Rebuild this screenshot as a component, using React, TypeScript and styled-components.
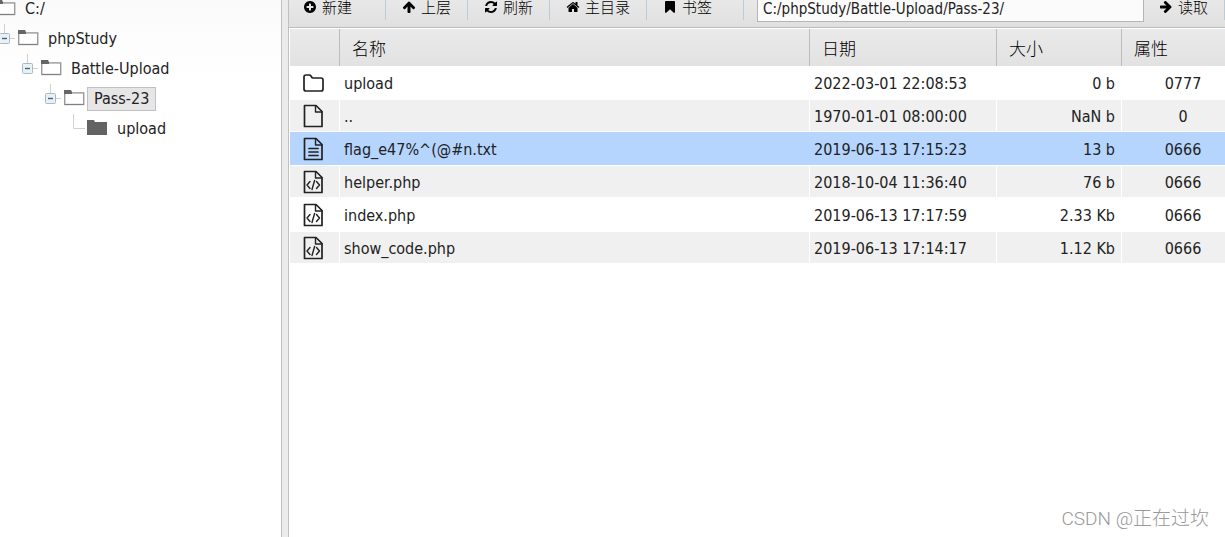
import React from "react";
import styled, { createGlobalStyle } from "styled-components";

const GlobalStyle = createGlobalStyle`
  * { box-sizing: border-box; }
  html, body, #root { height: 100%; }
  body {
    margin: 0;
    overflow: hidden;
    background: #fff;
    color: #222;
    font: 16px/20px "DejaVu Sans Condensed", "Noto Sans", "Noto Sans CJK SC", sans-serif;
  }
  button, input { font: inherit; color: inherit; }
`;

const Page = styled.div`
  display: flex;
  height: 100%;
`;

const Sidebar = styled.nav`
  flex: 0 0 281px;
  overflow: hidden;
  background: linear-gradient(#fafafa, #fff 80px);
`;

const Splitter = styled.div`
  flex: 0 0 8px;
  border: solid #c0c0c0;
  border-width: 0 1px;
  background: #ebebeb;
`;

const Main = styled.main`
  flex: 1;
  min-width: 0;
  overflow: hidden;
`;

const TreeList = styled.ul<{ $root?: boolean }>`
  list-style: none;
  margin: ${(p) => (p.$root ? "-6px 0 0 -24px" : "0")};
  padding: 0 0 0 ${(p) => (p.$root ? "0" : "23px")};
`;

const TreeRow = styled.div`
  display: flex;
  align-items: center;
  height: 30px;
`;

const Toggle = styled.button`
  width: 18px;
  height: 30px;
  padding: 0;
  border: 0;
  background: none;
`;

const Branch = styled.svg`
  display: block;
  width: 18px;
  height: 30px;
`;

const FolderSvg = styled.svg`
  width: 21px;
  height: 17px;
  margin: 0 2px 4px 1px;
`;

const TreeLabel = styled.a<{ $selected?: boolean }>`
  height: 24px;
  line-height: 22px;
  padding: 0 6px;
  border: 1px solid ${(p) => (p.$selected ? "#c0c0c0" : "transparent")};
  background: ${(p) => (p.$selected ? "#e6e6e6" : "none")};
  color: inherit;
  text-decoration: none;
`;

const Toolbar = styled.div`
  display: flex;
  align-items: flex-start;
  height: 28px;
  border-bottom: 1px solid #bcbcbc;
  background: linear-gradient(#e8e8e8, #e0e0e0);
`;

const ToolButton = styled.button<{ $roomy?: number }>`
  display: flex;
  align-items: center;
  gap: 5px;
  height: 20px;
  padding: 0 ${(p) => 16 + (p.$roomy ?? 0)}px 6px 16px;
  border: 0;
  border-right: 1px solid #b8cdd4;
  background: none;
  color: #000;
  font-size: 15px;
  font-weight: 300;
  font-family: "Noto Sans CJK SC", sans-serif;
  line-height: 14px;
  white-space: nowrap;

  &:first-child { padding-left: 14px; }
`;

const ToolSvg = styled.svg`
  flex: none;
  width: 14px;
  height: 14px;
`;

const PathInput = styled.input`
  flex: 1;
  min-width: 0;
  height: 22px;
  margin: 0 -1px 0 13px;
  padding: 0 5px 3px;
  border: 1px solid #b5b5b5;
  border-top: 0;
  background: #fbfbfb;
  font-size: 15px;
  outline: 0;
`;

const Files = styled.table`
  width: calc(100% + 20px);
  border: solid #fff;
  border-width: 1px 0 0 1px;
  border-spacing: 0;
  table-layout: fixed;
`;

const HeadCell = styled.th<{ $width?: number }>`
  width: ${(p) => (p.$width ? `${p.$width}px` : "auto")};
  height: 37px;
  padding: 0 12px;
  border-right: 1px solid #bcbcbc;
  background: linear-gradient(#eaeaea, #e2e2e2);
  color: #000;
  font-family: "Noto Sans CJK SC", sans-serif;
  font-size: 17px;
  font-weight: 300;
  text-align: left;
`;

const FileRow = styled.tr<{ $selected?: boolean }>`
  background: #fff;
  &:nth-child(even) { background: #f0f0f0; }
  td { border-color: #fff; }
  ${(p) => p.$selected && "&&, && td { background: #b5d5ff; border-color: #b5d5ff; }"}
`;

const Cell = styled.td<{ $align?: string }>`
  height: 33px;
  padding: 2px ${(p) => (p.$align === "right" ? 6 : 4)}px 0 4px;
  border: solid;
  border-width: 1px 1px 1px 0;
  text-align: ${(p) => p.$align ?? "left"};
  white-space: nowrap;
`;

const FileSvg = styled.svg`
  display: block;
  width: 22px;
  height: 24px;
  margin: -2px 0 0 9px;
  fill: none;
  stroke: #222;
  stroke-width: 1.7;
  stroke-linejoin: round;
  stroke-linecap: round;
`;

const Watermark = styled.div`
  position: absolute;
  right: 16px;
  bottom: 6px;
  color: #999;
  font: 300 19px/24px Roboto, "Noto Sans CJK SC", sans-serif;
`;

const toolPaths = {
  plus: "M1344 960v-128q0-26-19-45t-45-19h-256v-256q0-26-19-45t-45-19h-128q-26 0-45 19t-19 45v256h-256q-26 0-45 19t-19 45v128q0 26 19 45t45 19h256v256q0 26 19 45t45 19h128q26 0 45-19t19-45v-256h256q26 0 45-19t19-45zm320-64q0 209-103 385.5t-279.5 279.5-385.5 103-385.5-103-279.5-279.5-103-385.5 103-385.5 279.5-279.5 385.5-103 385.5 103 279.5 279.5 103 385.5z",
  arrow: "M1675 971q0 51-37 90l-75 75q-38 38-91 38-54 0-90-38l-294-293v704q0 52-37.5 84.5t-90.5 32.5h-128q-53 0-90.5-32.5t-37.5-84.5v-704l-294 293q-36 38-90 38t-90-38l-75-75q-38-38-38-90 0-53 38-91l651-651q35-37 90-37 54 0 91 37l651 651q37 39 37 91z",
  refresh: "M1639 1056q0 5-1 7-64 268-268 434.5t-478 166.5q-146 0-282.5-55t-243.5-157l-129 129q-19 19-45 19t-45-19-19-45v-448q0-26 19-45t45-19h448q26 0 45 19t19 45-19 45l-137 137q71 66 161 102t187 36q134 0 250-65t186-179q11-17 53-117 8-23 30-23h192q13 0 22.5 9.5t9.5 22.5zm25-800v448q0 26-19 45t-45 19h-448q-26 0-45-19t-19-45 19-45l138-138q-148-137-349-137-134 0-250 65t-186 179q-11 17-53 117-8 23-30 23h-199q-13 0-22.5-9.5t-9.5-22.5v-7q65-268 270-434.5t480-166.5q146 0 284 55.5t245 156.5l130-129q19-19 45-19t45 19 19 45z",
  home: "M1472 992v480q0 26-19 45t-45 19h-384v-384h-256v384h-384q-26 0-45-19t-19-45v-480q0-1 .5-3t.5-3l575-474 575 474q1 2 1 6zm223-69l-62 74q-8 9-21 11h-3q-13 0-21-7l-692-577-692 577q-12 8-24 7-13-2-21-11l-62-74q-8-10-7-23.5t11-21.5l719-599q32-26 76-26t76 26l244 204v-195q0-14 9-23t23-9h192q14 0 23 9t9 23v408l219 182q10 8 11 21.5t-7 23.5z",
  bookmark: "M1420 128q23 0 44 9 33 13 52.5 41t19.5 62v1289q0 34-19.5 62t-52.5 41q-19 8-44 8-48 0-83-32l-441-424-441 424q-36 33-83 33-23 0-44-9-33-13-52.5-41t-19.5-62v-1289q0-34 19.5-62t52.5-41q21-9 44-9h1048z",
};

function ToolIcon({ name, turned }: { name: keyof typeof toolPaths; turned?: boolean }) {
  return (
    <ToolSvg viewBox="0 0 1792 1792" aria-hidden="true">
      <path d={toolPaths[name]} transform={turned ? "rotate(90 896 896)" : undefined} />
    </ToolSvg>
  );
}

function FolderIcon({ open }: { open: boolean }) {
  return (
    <FolderSvg viewBox="0 0 21 17" aria-hidden="true">
      {open ? (
        <>
          <rect x="0.7" y="3.9" width="19" height="11.6" fill="#fff" stroke="#9a9a9a" strokeWidth="1.4" />
          <path d="M1 15.5h18.5" stroke="#808080" />
          <path d="M0 1h7l1 2v2H0z" fill="#666" />
        </>
      ) : (
        <path d="M0 1h7l1 2h12v13H0z" fill="#636363" />
      )}
    </FolderSvg>
  );
}

type Node = { name: string; selected?: boolean; children?: Node[] };

const tree: Node = {
  name: "C:/",
  children: [{
    name: "phpStudy",
    children: [{
      name: "Battle-Upload",
      children: [{ name: "Pass-23", selected: true, children: [{ name: "upload" }] }],
    }],
  }],
};

function TreeNode({ node }: { node: Node }) {
  const open = !!node.children;
  return (
    <li>
      <TreeRow>
        {open ? (
          <Toggle aria-label={`Collapse ${node.name}`}>
            <Branch viewBox="0 0 18 30">
              <path d="M5.5 0v9M11 14.5h5" stroke="#d0d0d0" />
              <rect x="0.5" y="9.5" width="10" height="10" rx="1" fill="#eaf1f5" stroke="#a9bac6" />
              <path d="M3 14.5h5" stroke="#43617a" strokeWidth="1.4" />
            </Branch>
          </Toggle>
        ) : (
          <Branch viewBox="0 0 18 30" aria-hidden="true">
            <path d="M5.5 0v14.5H17" fill="none" stroke="#d0d0d0" />
          </Branch>
        )}
        <FolderIcon open={open} />
        <TreeLabel href="#" $selected={node.selected}>{node.name}</TreeLabel>
      </TreeRow>
      {node.children && (
        <TreeList>
          {node.children.map((c) => <TreeNode key={c.name} node={c} />)}
        </TreeList>
      )}
    </li>
  );
}

type Kind = "folder" | "blank" | "text" | "code";

function FileIcon({ kind }: { kind: Kind }) {
  if (kind === "folder") {
    return (
      <FileSvg viewBox="0 0 22 24" aria-hidden="true">
        <path d="M1 6q0-2 2-2h3q1.500 0 2 1l.6 1q.5 1 1.500 1H18q2 0 2 2V18q0 2-2 2H3q-2 0-2-2z" />
      </FileSvg>
    );
  }
  return (
    <FileSvg viewBox="0 0 22 24" aria-hidden="true">
      <path d="M1.5 1.5h11.500l6 6v15H1.5z" />
      <path d="M12.5 2v6H19" strokeWidth="1.4" />
      {kind === "text" && <path d="M6 11.5h9M6 15h9M6 18.5h9" />}
      {kind === "code" && (
        <path d="M7 11.5l-3 3.500 3 3.500M13.5 11.5l3 3.500-3 3.500M11.6 10.5l-2.600 9" strokeWidth="1.4" />
      )}
    </FileSvg>
  );
}

const files: { kind: Kind; name: string; date: string; size: string; mode: string; selected?: boolean }[] = [
  { kind: "folder", name: "upload", date: "2022-03-01 22:08:53", size: "0 b", mode: "0777" },
  { kind: "blank", name: "..", date: "1970-01-01 08:00:00", size: "NaN b", mode: "0" },
  { kind: "text", name: "flag_e47%^(@#n.txt", date: "2019-06-13 17:15:23", size: "13 b", mode: "0666", selected: true },
  { kind: "code", name: "helper.php", date: "2018-10-04 11:36:40", size: "76 b", mode: "0666" },
  { kind: "code", name: "index.php", date: "2019-06-13 17:17:59", size: "2.33 Kb", mode: "0666" },
  { kind: "code", name: "show_code.php", date: "2019-06-13 17:14:17", size: "1.12 Kb", mode: "0666" },
];

export default function App() {
  return (
    <>
      <GlobalStyle />
      <Page>
        <Sidebar>
          <TreeList $root><TreeNode node={tree} /></TreeList>
        </Sidebar>
        <Splitter />
        <Main>
          <Toolbar>
            <ToolButton $roomy={17}><ToolIcon name="plus" />新建</ToolButton>
            <ToolButton><ToolIcon name="arrow" />上层</ToolButton>
            <ToolButton><ToolIcon name="refresh" />刷新</ToolButton>
            <ToolButton><ToolIcon name="home" />主目录</ToolButton>
            <ToolButton $roomy={15}><ToolIcon name="bookmark" />书签</ToolButton>
            <PathInput aria-label="Path" defaultValue="C:/phpStudy/Battle-Upload/Pass-23/" />
            <ToolButton><ToolIcon name="arrow" turned />读取</ToolButton>
          </Toolbar>
          <Files>
            <thead>
              <tr>
                <HeadCell $width={50} aria-label="Type" />
                <HeadCell>名称</HeadCell>
                <HeadCell $width={187}>日期</HeadCell>
                <HeadCell $width={125}>大小</HeadCell>
                <HeadCell $width={123}>属性</HeadCell>
              </tr>
            </thead>
            <tbody>
              {files.map((f) => (
                <FileRow key={f.name} $selected={f.selected}>
                  <Cell><FileIcon kind={f.kind} /></Cell>
                  <Cell>{f.name}</Cell>
                  <Cell>{f.date}</Cell>
                  <Cell $align="right">{f.size}</Cell>
                  <Cell $align="center">{f.mode}</Cell>
                </FileRow>
              ))}
            </tbody>
          </Files>
        </Main>
      </Page>
      <Watermark>CSDN @正在过坎</Watermark>
    </>
  );
}
